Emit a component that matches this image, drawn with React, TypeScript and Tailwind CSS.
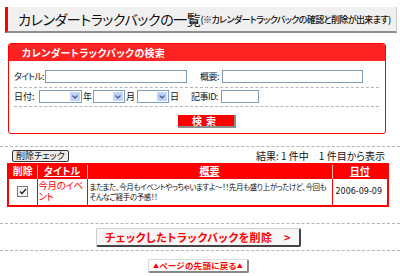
import React from 'react';

const Dotted = ({ className = '' }: { className?: string }) => (
  <div className={`border-t border-dashed border-[#b5b5b5] ${className}`} />
);

const Select = ({ w }: { w: string }) => (
  <div className={`${w} shrink-0 h-[13px] border border-[#7f9db9] bg-white flex justify-end p-px`}>
    <div className="w-[10px] h-full bg-[#c1d3fb] rounded-[1px] flex items-center justify-center">
      <svg width="6" height="4" viewBox="0 0 6 4">
        <path d="M0.5 0.5 L3 3 L5.5 0.5" stroke="#4d6185" strokeWidth="1.3" fill="none" />
      </svg>
    </div>
  </div>
);

const Input = ({ w }: { w: string }) => (
  <div className={`${w} shrink-0 h-[13px] border border-[#7f9db9] bg-white`} />
);

export default function App() {
  return (
    <div className="w-[400px] h-[276px] bg-white overflow-hidden whitespace-nowrap font-['Noto_Sans_CJK_JP','Liberation_Sans',sans-serif] [font-feature-settings:'palt'] text-[#111]">
      {/* title */}
      <div className="mt-[7px] ml-[5px] w-[392px] h-[26px] bg-[#f0f0f0] border-l-[3px] border-[#ff0000] border-b-2 border-b-[#8f8f8f] border-r border-r-[#c8c8c8] flex items-center pl-[10px]">
        <span className="text-[14px] leading-none tracking-[-0.4px]">カレンダートラックバックの一覧</span>
        <span className="text-[9px] leading-none font-medium tracking-[-0.6px]">(※カレンダートラックバックの確認と削除が出来ます)</span>
      </div>

      {/* search box */}
      <div className="mt-[10px] ml-[8px] w-[378px] border border-[#ff0000] rounded-[3px] overflow-hidden">
        <div className="h-[17px] bg-[#ff2222] text-white font-bold text-[10px] leading-none flex items-center pl-[13px] tracking-[0.3px]">
          カレンダートラックバックの検索
        </div>
        <div className="px-[5px] pt-[9px] pb-[5px] text-[9px] leading-none">
          <div className="flex items-center h-[13px]">
            <span className="w-[31px] shrink-0 tracking-[-0.8px]">タイトル:</span>
            <Input w="w-[142px]" />
            <span className="ml-[13px] w-[22px] shrink-0 tracking-[-0.5px]">概要:</span>
            <Input w="w-[141px]" />
          </div>
          <Dotted className="mt-[4px] mr-[1px]" />
          <div className="flex items-center h-[13px] mt-[2px]">
            <span className="w-[25px] shrink-0">日付:</span>
            <Select w="w-[43px]" />
            <span className="w-[11px] shrink-0 pl-px">年</span>
            <Select w="w-[32px]" />
            <span className="w-[12px] shrink-0 pl-px">月</span>
            <Select w="w-[32px]" />
            <span className="w-[22px] shrink-0 pl-px">日</span>
            <span className="w-[30px] shrink-0 tracking-[-0.5px]">記事ID:</span>
            <Input w="w-[38px]" />
          </div>
          <Dotted className="mt-[3px] mr-[1px]" />
          <div className="flex justify-center mt-[8px]">
            <div className="ml-[20px] w-[58px] h-[13px] bg-[#ff0000] text-white font-bold text-[10px] leading-none flex items-center justify-center border-r-2 border-b-2 border-[#8c8c8c] tracking-[4px]">
              検索
            </div>
          </div>
        </div>
      </div>

      <Dotted className="mt-[12px]" />

      {/* results bar */}
      <div className="flex items-center justify-between mt-[2px] pl-[12px] pr-[15px] h-[13px]">
        <div className="h-[12px] px-[3px] bg-[#ececec] border border-[#333] rounded-[2px] text-[9px] leading-none flex items-center">
          削除チェック
        </div>
        <div className="text-[10px] leading-none">結果: 1 件中　1 件目から表示</div>
      </div>

      {/* table */}
      <table className="mt-[1px] ml-[7px] w-[382px] table-fixed border-collapse border-2 border-[#ff0000] text-[7.5px] leading-[10px]">
        <colgroup>
          <col className="w-[29px]" />
          <col className="w-[50px]" />
          <col />
          <col className="w-[56px]" />
        </colgroup>
        <thead>
          <tr className="h-[14px] bg-[#ff0000] text-white text-[10px] leading-none">
            <th className="border-r border-[#ffbdbd] font-bold">削除</th>
            <th className="border-r border-[#ffbdbd] font-bold underline">タイトル</th>
            <th className="border-r border-[#ffbdbd] font-bold underline">概要</th>
            <th className="font-bold underline">日付</th>
          </tr>
        </thead>
        <tbody>
          <tr className="h-[28px]">
            <td className="border border-[#ff0000] text-center">
              <div className="mx-auto w-[11px] h-[11px] border border-[#7a7a7a] bg-[#f4f4f4] flex items-center justify-center">
                <svg width="8" height="7" viewBox="0 0 8 7">
                  <path d="M1 3.5 L3 5.5 L7 1" stroke="#222" strokeWidth="1.4" fill="none" />
                </svg>
              </div>
            </td>
            <td className="border border-[#ff0000] text-[#ff0000] text-[9.5px] leading-[11px] tracking-[-0.4px] align-top pt-[1px] pl-[1px] whitespace-normal break-all">
              今月のイベント
            </td>
            <td className="border border-[#ff0000] px-[2px] align-middle tracking-[-0.4px] overflow-hidden">
              またまた、今月もイベントやっちゃいますよ～！！先月も盛り上がったけど、今回も<br />そんなご経手の予感！！
            </td>
            <td className="border border-[#ff0000] pl-[3px] font-['DejaVu_Sans',sans-serif] text-[8px]">2006-09-09</td>
          </tr>
        </tbody>
      </table>

      <Dotted className="mt-[16px]" />

      <div className="flex justify-center mt-[4px] ml-[-3px]">
        <div className="w-[205px] h-[19px] bg-[#f6f6f6] border border-[#cfcfcf] border-r-2 border-b-2 border-r-[#444] border-b-[#444] rounded-[2px] text-[#ff0000] font-bold text-[11px] leading-none flex items-center justify-center tracking-[0.5px]">
          チェックしたトラックバックを削除　&gt;
        </div>
      </div>

      <Dotted className="mt-[3px]" />

      <div className="flex justify-center mt-[8px] ml-[-3px]">
        <div className="w-[101px] h-[14px] bg-white border border-[#ddd] border-r-2 border-b-2 border-r-[#888] border-b-[#888] rounded-[2px] text-[#ff0000] font-bold text-[8.5px] leading-none flex items-center justify-center tracking-[0.3px]">
          <span className="text-[6px]">▲</span>ページの先頭に戻る<span className="text-[6px]">▲</span>
        </div>
      </div>
    </div>
  );
}
